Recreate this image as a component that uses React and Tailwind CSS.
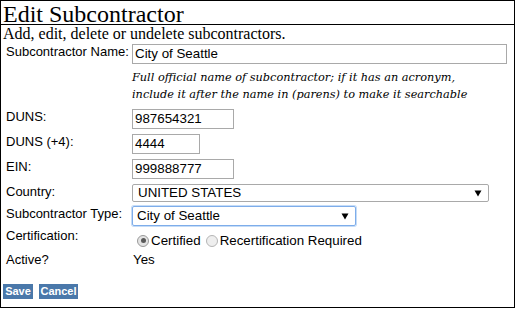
import React from 'react';

const arial = { fontFamily: '"Liberation Sans", Arial, sans-serif' };

const Arrow = () => (
  <svg width="8" height="7" viewBox="0 0 8 7" className="shrink-0">
    <polygon points="0.5,0.5 7.5,0.5 4,6.5" fill="#000" />
  </svg>
);

const Row = ({ label, children, className = '' }) => (
  <div className={`flex items-start ${className}`}>
    <div className="w-[131px] shrink-0 pl-[5px] text-[13px] leading-[15px] text-black">{label}</div>
    {children}
  </div>
);

const TextBox = ({ value, width }) => (
  <div
    className={`${width} h-[20px] border border-[#a9a9a9] bg-white flex items-center pl-[2px] text-[13.33px] text-black`}
  >
    {value}
  </div>
);

const Radio = ({ checked }) => (
  <span
    className={`relative inline-flex items-center justify-center w-[12px] h-[12px] rounded-full border ${
      checked ? 'border-[#9a9a9a] bg-[#e4e4e4]' : 'border-[#b5b5b5] bg-[#eeeeee]'
    }`}
  >
    {checked && <span className="w-[5px] h-[5px] rounded-full bg-[#5a5a5a]" />}
  </span>
);

export default function App() {
  return (
    <div className="w-[515px] h-[308px] border border-black bg-white overflow-hidden" style={arial}>
      <h1
        className="h-[24px] pt-[2px] leading-[22px] text-[24px] pl-[2px] border-b border-black text-black"
        style={{ fontFamily: '"Liberation Serif", "Times New Roman", serif' }}
      >
        Edit Subcontractor
      </h1>
      <p
        className="h-[15px] pt-[1px] text-[16px] leading-[15px] pl-[2px] text-black"
        style={{ fontFamily: '"Liberation Serif", "Times New Roman", serif' }}
      >
        Add, edit, delete or undelete subcontractors.
      </p>

      <div className="mt-[4px]">
        <Row label="Subcontractor Name:">
          <TextBox value="City of Seattle" width="w-[375px]" />
        </Row>
        <p
          className="ml-[131px] mt-[5px] text-[11.3px] leading-[17px] italic text-black"
          style={{ fontFamily: '"DejaVu Serif", Georgia, serif' }}
        >
          Full official name of subcontractor; if it has an acronym,
          <br />
          include it after the name in (parens) to make it searchable
        </p>
        <Row label="DUNS:" className="mt-[6px]">
          <TextBox value="987654321" width="w-[102px]" />
        </Row>
        <Row label="DUNS (+4):" className="mt-[5px]">
          <TextBox value="4444" width="w-[68px]" />
        </Row>
        <Row label="EIN:" className="mt-[5px]">
          <TextBox value="999888777" width="w-[102px]" />
        </Row>
        <Row label="Country:" className="mt-[5px]">
          <div className="w-[357px] h-[18px] border border-[#a9a9a9] rounded-[2px] flex items-center justify-between pl-[5px] pr-[6px] text-[13.33px] text-black">
            <span>UNITED STATES</span>
            <Arrow />
          </div>
        </Row>
        <Row label="Subcontractor Type:" className="mt-[4px]">
          <div className="w-[224px] h-[20px] border border-[#7eadea] rounded-[2px] shadow-[0_0_0_1px_#c5dcf7] flex items-center justify-between pl-[4px] pr-[6px] text-[13.33px] text-black">
            <span>City of Seattle</span>
            <Arrow />
          </div>
        </Row>
        <Row label="Certification:" className="mt-[2px]">
          <div className="mt-[5px] flex items-center text-[13.33px] leading-[15px] text-black">
            <span className="ml-[5px] mr-[2px] flex"><Radio checked /></span>
            <span>Certified</span>
            <span className="ml-[5px] mr-[2px] flex"><Radio /></span>
            <span>Recertification Required</span>
          </div>
        </Row>
        <Row label="Active?" className="mt-[4px]">
          <div className="pl-[1px] text-[13.33px] leading-[15px] text-black">Yes</div>
        </Row>
        <div className="mt-[17px] ml-[2px] flex gap-[6px]">
          <button className="h-[15px] w-[30px] bg-[#4a78aa] text-white text-[11px] font-bold leading-[15px]">Save</button>
          <button className="h-[15px] w-[39px] bg-[#4a78aa] text-white text-[11px] font-bold leading-[15px]">Cancel</button>
        </div>
      </div>
    </div>
  );
}
